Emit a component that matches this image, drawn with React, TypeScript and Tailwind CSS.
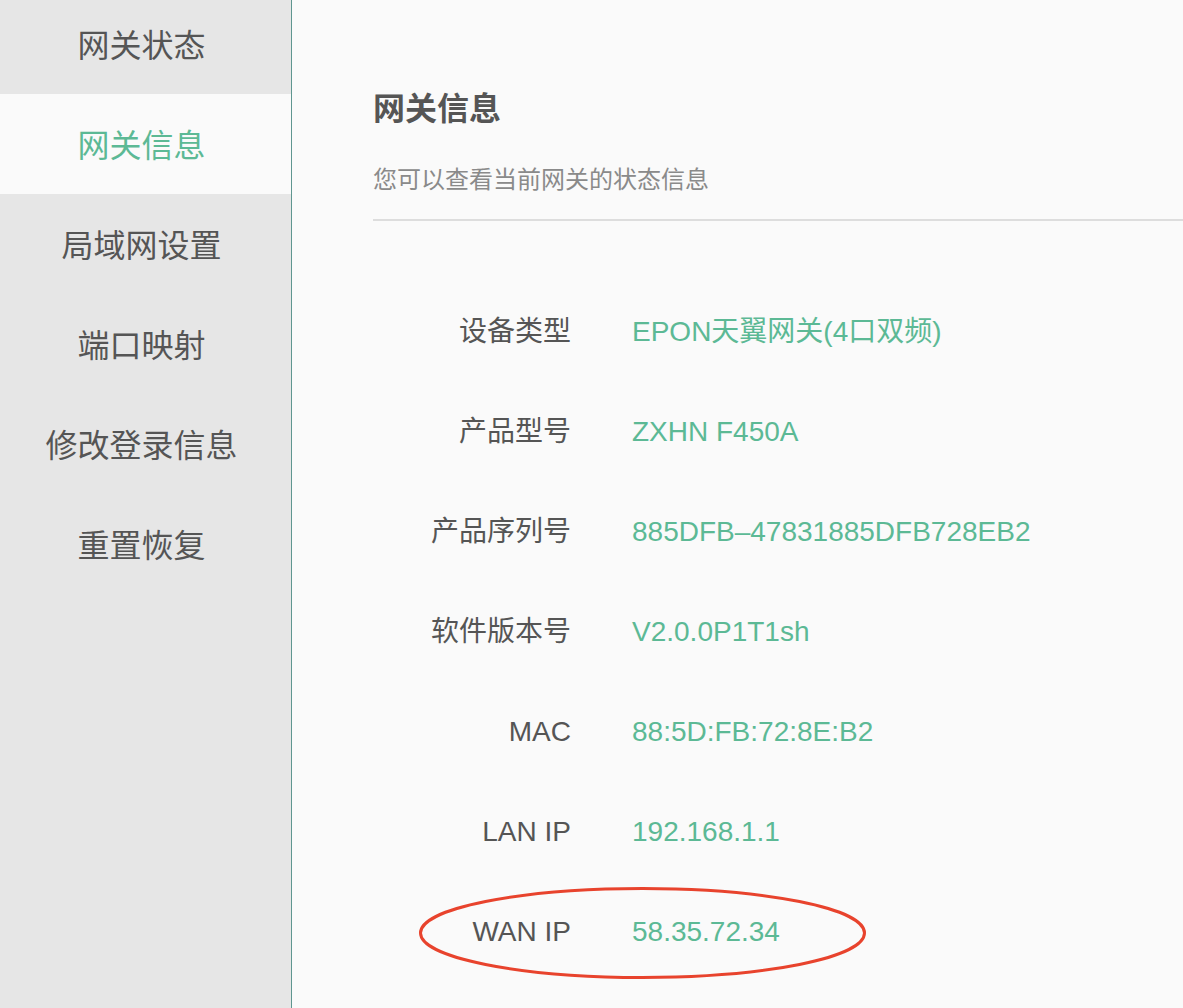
import React from "react";

const menu = ["网关状态", "网关信息", "局域网设置", "端口映射", "修改登录信息", "重置恢复"];

const rows: [string, string][] = [
  ["设备类型", "EPON天翼网关(4口双频)"],
  ["产品型号", "ZXHN F450A"],
  ["产品序列号", "885DFB–47831885DFB728EB2"],
  ["软件版本号", "V2.0.0P1T1sh"],
  ["MAC", "88:5D:FB:72:8E:B2"],
  ["LAN IP", "192.168.1.1"],
  ["WAN IP", "58.35.72.34"],
];

export default function App() {
  return (
    <div
      className="flex h-[1008px] w-full overflow-hidden bg-[#fafafa]"
      style={{ fontFamily: '"Liberation Sans", "Noto Sans CJK SC", sans-serif' }}
    >
      <aside className="w-[292px] shrink-0 bg-[#e6e6e6] border-r border-[#5f9690]">
        <ul className="-mt-[6px]">
          {menu.map((m, i) => (
            <li
              key={m}
              className={
                "h-[100px] flex items-center justify-center pr-[8px] pt-[4px] text-[32px] " +
                (i === 1 ? "bg-[#fafafa] text-[#5cb995]" : "text-[#555555]")
              }
            >
              {m}
            </li>
          ))}
        </ul>
      </aside>
      <main className="flex-1 pl-[81px] pt-[89px] flex flex-col">
        <h1 className="text-[32px] leading-[40px] font-bold text-[#555555]">网关信息</h1>
        <p className="mt-[35px] text-[24px] leading-[32px] text-[#8a8a8a]">您可以查看当前网关的状态信息</p>
        <div className="mt-[23px] h-[2px] bg-[#dddddd]" />
        <div className="mt-[61px] flex flex-col">
          {rows.map(([k, v], i) => (
            <div key={k} className="relative h-[100px] flex items-center text-[28px]">
              <div className="w-[198px] text-right text-[#555555]">{k}</div>
              <div className="ml-[61px] text-[#5cb995]">{v}</div>
              {i === rows.length - 1 && (
                <svg
                  className="absolute left-[45px] top-[4px]"
                  width="449"
                  height="94"
                  viewBox="0 0 449 94"
                >
                  <ellipse cx="224.5" cy="47" rx="222" ry="44.5" fill="none" stroke="#e8432d" strokeWidth="3" />
                </svg>
              )}
            </div>
          ))}
        </div>
      </main>
    </div>
  );
}
